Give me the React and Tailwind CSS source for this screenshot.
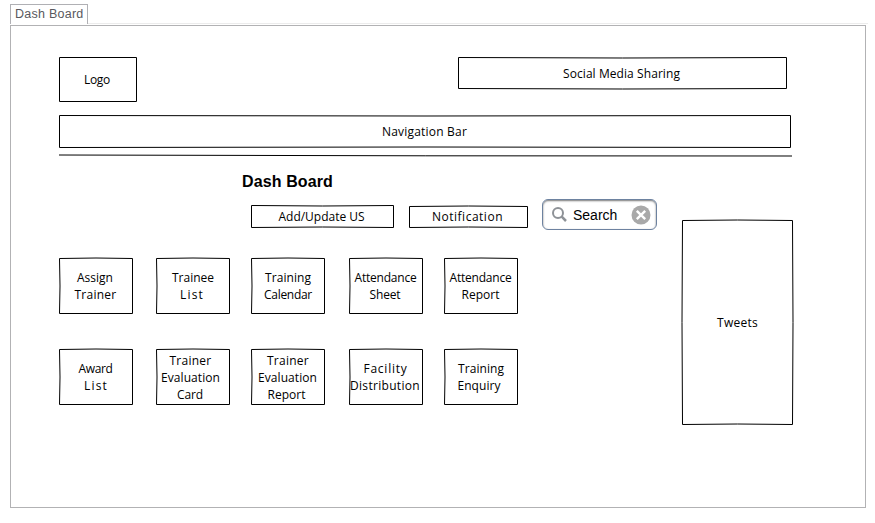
import { useLayoutEffect, useRef, useState } from "react";

// One line of hand-lettered text, spaced out to a given width.
function Line({ text, width, shift = 0 }) {
  const ref = useRef(null);
  const [spacing, setSpacing] = useState(0);
  useLayoutEffect(() => {
    const natural = ref.current.getBoundingClientRect().width;
    setSpacing((width - natural) / text.length);
  }, [text, width]);
  return (
    <span className="block h-[17px] whitespace-nowrap" style={{ marginLeft: shift * 2 }}>
      <span ref={ref} className="inline-block" style={{ letterSpacing: spacing }}>
        {text}
      </span>
    </span>
  );
}

// Box with slightly bowed edges. bow = outward offset of [top, right, bottom, left].
function SketchBox({ w, h, bow = [0, 0, 0, 0], className = "", children }) {
  const [t, r, b, l] = bow;
  const x = w - 0.5;
  const y = h - 0.5;
  const d = `M.5 .5Q${w / 2} ${0.5 - 2 * t} ${x} .5Q${x + 2 * r} ${h / 2} ${x} ${y}Q${w / 2} ${y + 2 * b} .5 ${y}Q${0.5 - 2 * l} ${h / 2} .5 .5Z`;
  return (
    <div
      className={`relative flex shrink-0 flex-col items-center justify-center text-center ${className}`}
      style={{ width: w, height: h }}
    >
      <svg className="absolute inset-0 overflow-visible" width={w} height={h} fill="none" stroke="#000">
        <path d={d} />
      </svg>
      {children}
    </div>
  );
}

// Each line: text, width, horizontal shift from the tile's centre.
const tiles = [
  [["Assign", 36, -1], ["Trainer", 42, -0.5]],
  [["Trainee", 42, 0], ["List", 24, -1]],
  [["Training", 46, 0], ["Calendar", 48, 0]],
  [["Attendance", 62, -0.5], ["Sheet", 31, -1]],
  [["Attendance", 62, -0.5], ["Report", 38, -0.5]],
  [["Award", 34, -0.5], ["List", 24, 0]],
  [["Trainer", 42, -2.5], ["Evaluation", 59, -2.5], ["Card", 26, -3]],
  [["Trainer", 42, 0], ["Evaluation", 59, -0.5], ["Report", 38, -1.5]],
  [["Facility", 44, -0.5], ["Distribution", 70, -1]],
  [["Training", 46, 0], ["Enquiry", 43, -2]],
];

export default function App() {
  return (
    <div className="h-[523px] w-[875px] overflow-hidden bg-white pt-1 pl-[10px] font-['Comic_Sans_MS','Open_Sans',sans-serif] text-[12px] leading-[17px] text-black">
      <div className="flex h-5 items-end">
        <div className="h-5 w-[78px] border border-b-0 border-[#b0b0b4] pt-px pl-1 font-['Liberation_Sans',Arial,sans-serif] text-[12.5px] leading-[17px] whitespace-nowrap text-[#59595e]">
          <Line text="Dash Board" width={68.5} />
        </div>
        <div className="h-px w-[780px] bg-[#ececec]" />
      </div>
      <main className="mt-px h-[483px] w-[856px] border border-[#b2b2b4] pt-[31px] pl-12">
        <header className="flex">
          <SketchBox w={78} h={45}>
            <Line text="Logo" width={26} shift={-1} />
          </SketchBox>
          <SketchBox w={329} h={32} bow={[-0.5, 0, 0.5, 0]} className="ml-[321px]">
            <Line text="Social Media Sharing" width={117} shift={-1} />
          </SketchBox>
        </header>
        <SketchBox w={732} h={33} bow={[-0.5, 0, -0.5, 0]} className="mt-[13px]">
          <Line text="Navigation Bar" width={85} shift={-0.5} />
        </SketchBox>
        <svg className="mt-[5px] block" width="733" height="5" fill="none" stroke="#000">
          <path d="M0 2Q367 3.1 733 3" />
        </svg>
        <div className="flex">
          <div className="w-[623px]">
            <h1 className="mt-[14px] ml-[183px] h-5 font-['Liberation_Sans',Arial,sans-serif] text-[16px] leading-5 font-bold tracking-[0.12px]">
              Dash Board
            </h1>
            <div className="mt-[7px] ml-48 flex h-8">
              <SketchBox w={143} h={23} bow={[-0.5, 0, -0.5, 0]} className="mt-[6px]">
                <Line text="Add/Update US" width={86} shift={-1} />
              </SketchBox>
              <SketchBox w={119} h={22} bow={[0.5, 0, -0.5, 0]} className="mt-[7px] ml-[15px] pb-px">
                <Line text="Notification" width={71} shift={-1} />
              </SketchBox>
              <div className="ml-[14px] flex h-[31px] w-[115px] items-center rounded-[6px] border border-[#6d82a0] bg-white pl-[9px] font-['Liberation_Sans',Arial,sans-serif] text-[14px] shadow-[inset_0_1px_2px_#777]">
                <svg width="15" height="15" fill="none" stroke="#8e9297" strokeWidth="2">
                  <circle cx="6" cy="6" r="5" />
                  <path d="M9.7 9.7 14 14" strokeWidth="2.5" />
                </svg>
                <span className="ml-[6px] w-[46px] pt-px">Search</span>
                <svg className="ml-[12px]" width="20" height="20">
                  <circle cx="10" cy="10" r="9.5" fill="#a9a9a9" />
                  <path d="M5.8 5.8 14.2 14.2M14.2 5.8 5.8 14.2" stroke="#fff" strokeWidth="2.4" />
                </svg>
              </div>
            </div>
            <div className="mt-[27px] grid grid-cols-[97px_95px_98px_95px_74px] gap-y-[35px]">
              {tiles.map((lines, i) => (
                <SketchBox key={i} w={74} h={56} bow={[0.5, 0, 0, -0.5]}>
                  {lines.map(([text, width, shift]) => (
                    <Line key={text} text={text} width={width} shift={shift} />
                  ))}
                </SketchBox>
              ))}
            </div>
          </div>
          <SketchBox w={111} h={205} bow={[0.5, 0.5, -0.5, 0.5]} className="mt-[62px]">
            <Line text="Tweets" width={41} />
          </SketchBox>
        </div>
      </main>
    </div>
  );
}
